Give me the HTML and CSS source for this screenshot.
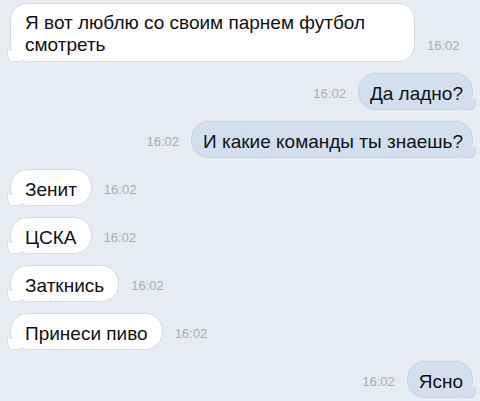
FILE: index.html
```html
<!DOCTYPE html>
<html lang="ru">
<head>
<meta charset="utf-8">
<link rel="stylesheet" href="styles.css">
</head>
<body>
<div class="chat">
  <div class="row in first">
    <div class="bubble">Я вот люблю со своим парнем футбол смотреть</div>
    <span class="time">16:02</span>
  </div>
  <div class="row out">
    <span class="time">16:02</span>
    <div class="bubble">Да ладно?</div>
  </div>
  <div class="row out">
    <span class="time">16:02</span>
    <div class="bubble">И какие команды ты знаешь?</div>
  </div>
  <div class="row in">
    <div class="bubble">Зенит</div>
    <span class="time">16:02</span>
  </div>
  <div class="row in">
    <div class="bubble">ЦСКА</div>
    <span class="time">16:02</span>
  </div>
  <div class="row in">
    <div class="bubble">Заткнись</div>
    <span class="time">16:02</span>
  </div>
  <div class="row in">
    <div class="bubble">Принеси пиво</div>
    <span class="time">16:02</span>
  </div>
  <div class="row out">
    <span class="time">16:02</span>
    <div class="bubble">Ясно</div>
  </div>
</div>
</body>
</html>
```
FILE: styles.css
```css
html, body {
  margin: 0;
  padding: 0;
}
body {
  background: #e7ecf2;
  width: 480px;
  height: 401px;
  overflow: hidden;
  font-family: "Liberation Sans", Arial, sans-serif;
  color: #111;
}
.chat {
  display: flex;
  flex-direction: column;
  gap: 11px;
  padding: 3px 7px 0 10px;
}
.row {
  display: flex;
  align-items: flex-end;
  gap: 12px;
}
.row.out {
  justify-content: flex-end;
  gap: 12px;
}
.bubble {
  position: relative;
  font-size: 19px;
  line-height: 22px;
  padding: 9px 14px 4px 14px;
  border-radius: 18px;
  border: 1px solid #d5dbe3;
}
.in .bubble {
  background: #ffffff;
}
.out .bubble {
  background: #d3dfee;
  border-color: #c5d1e0;
  padding: 9px 9px 4px 11px;
}
.first .bubble {
  width: 375px;
  border-radius: 17px;
  padding: 8px 14px 5px 14px;
}
.in .bubble::after {
  content: "";
  position: absolute;
  left: -4px;
  bottom: -1px;
  width: 12px;
  height: 10px;
  background: #ffffff;
  border-left: 1px solid #d5dbe3;
  border-bottom: 1px solid #d5dbe3;
  border-bottom-left-radius: 4px 10px;
}
.out .bubble::after {
  content: "";
  position: absolute;
  right: -4px;
  bottom: -1px;
  width: 12px;
  height: 10px;
  background: #d3dfee;
  border-right: 1px solid #c5d1e0;
  border-bottom: 1px solid #c5d1e0;
  border-bottom-right-radius: 4px 10px;
}
.time {
  font-size: 13px;
  line-height: 15px;
  color: #a5aeb8;
  margin-bottom: 9px;
}
```
